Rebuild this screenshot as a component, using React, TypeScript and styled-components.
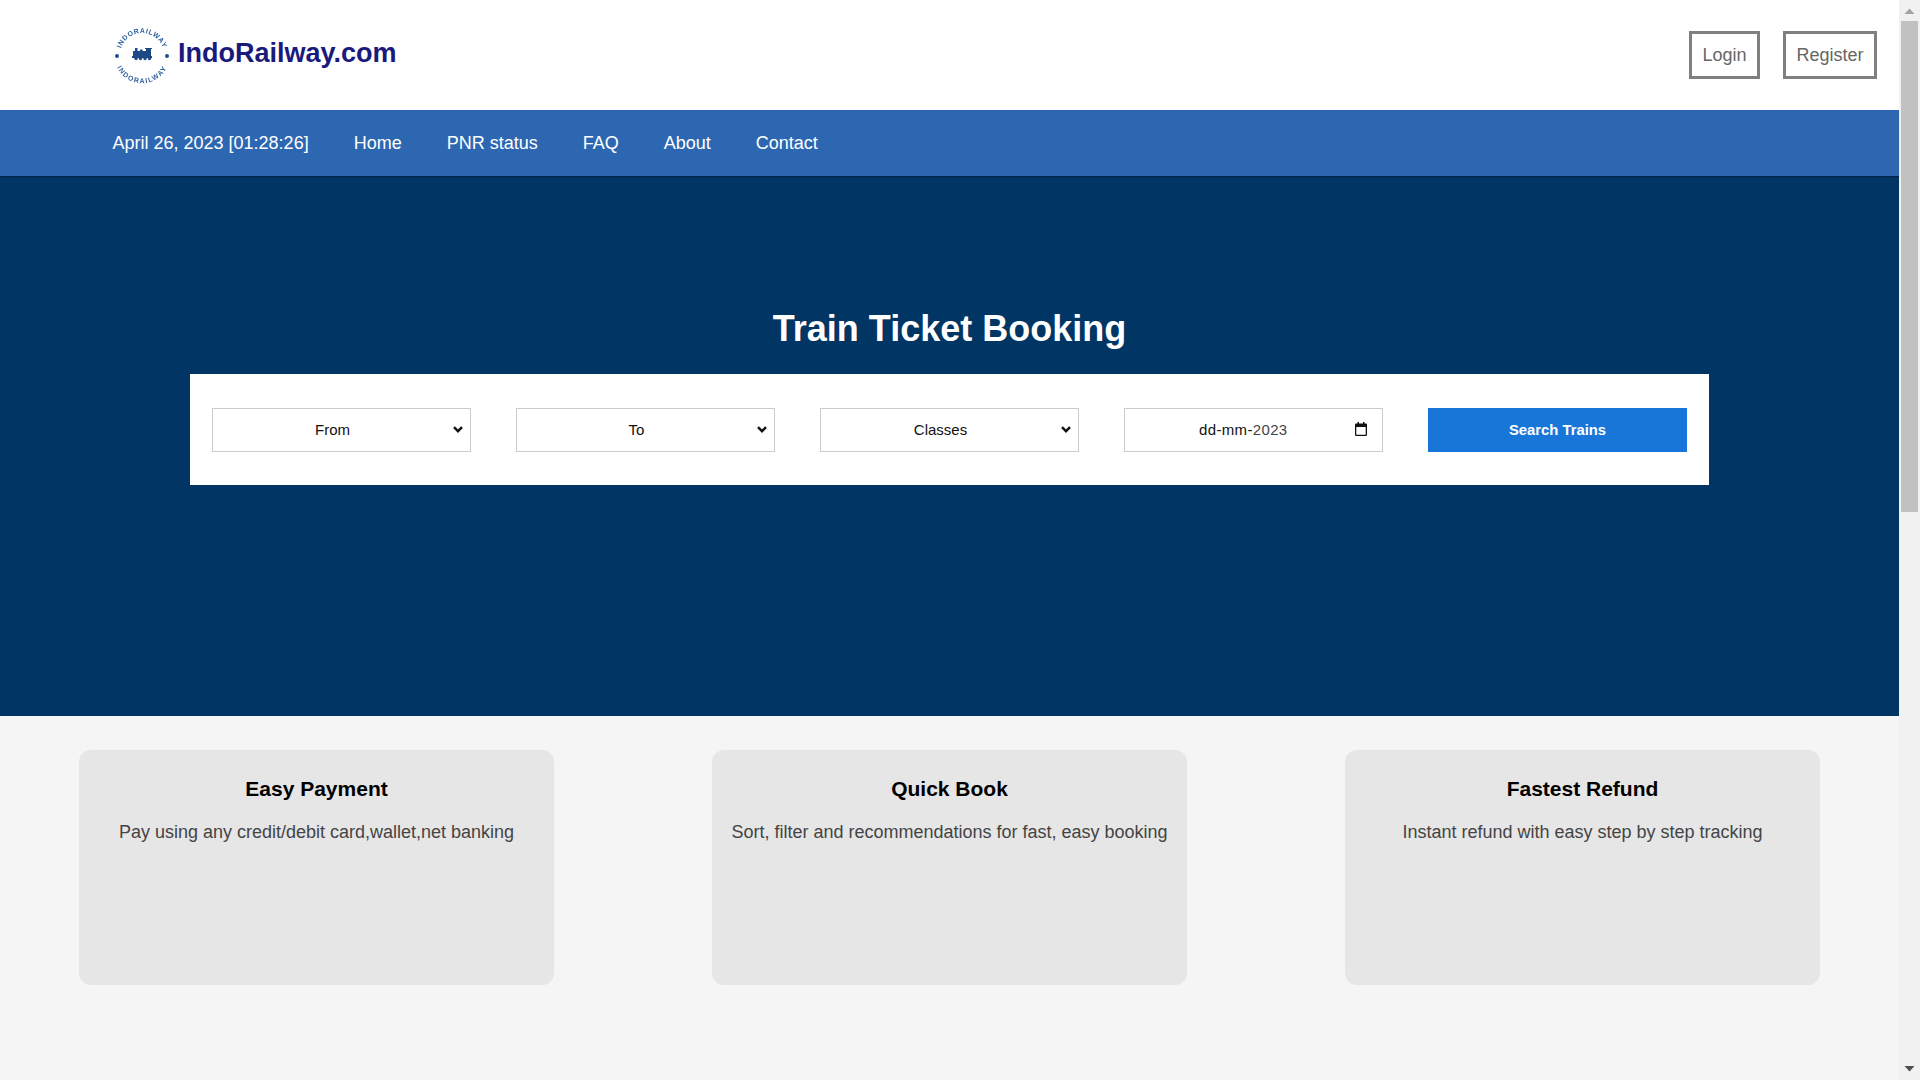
import React from "react";
import styled, { createGlobalStyle } from "styled-components";

const upArrow =
  "url(\"data:image/svg+xml,%3Csvg xmlns='http://www.w3.org/2000/svg' width='21' height='21'%3E%3Cpath d='M5.500 14h10l-5-5.500z' fill='%23a3a3a3'/%3E%3C/svg%3E\")";
const downArrow =
  "url(\"data:image/svg+xml,%3Csvg xmlns='http://www.w3.org/2000/svg' width='21' height='21'%3E%3Cpath d='M5.500 7h10l-5 5.500z' fill='%23505050'/%3E%3C/svg%3E\")";
const chevron =
  "url(\"data:image/svg+xml,%3Csvg xmlns='http://www.w3.org/2000/svg' width='10' height='7'%3E%3Cpath d='M1 1.200 5 5.200l4-4' fill='none' stroke='%23111' stroke-width='2.400'/%3E%3C/svg%3E\")";

const GlobalStyle = createGlobalStyle`
  html, body {
    height: 100%;
    overflow: hidden;
  }
  body {
    margin: 0;
    background: #f5f5f5;
    font-family: "Liberation Sans", Arial, sans-serif;
  }
`;

const Shell = styled.div`
  height: 100vh;
  display: flex;
  overflow: hidden;
`;

const Main = styled.main`
  flex: 1;
  min-width: 0;
  background: #f5f5f5;
`;

/* the browser's own scrollbar does not show up in the photo, so it is drawn */
const ScrollRail = styled.div`
  width: 21px;
  flex: none;
  display: flex;
  flex-direction: column;
  background: #f1f1f1;
`;

const ScrollButton = styled.div<{ $down?: boolean }>`
  height: 21px;
  flex: none;
  background: ${(p) => (p.$down ? downArrow : upArrow)} no-repeat center;
`;

const ScrollTrack = styled.div`
  flex: 1;
`;

const ScrollThumb = styled.div`
  height: 491px;
  margin: 0 2px;
  background: #c1c1c1;
`;

const Header = styled.header`
  height: 110px;
  background: #fff;
  display: flex;
  align-items: center;
  justify-content: space-between;
  padding: 0 22px 0 112px;
`;

const Brand = styled.div`
  display: flex;
  align-items: center;
  gap: 6px;
`;

const BrandName = styled.span`
  font-size: 27px;
  font-weight: 700;
  color: #1a1a7c;
  margin-top: -4px;
`;

const LogoMark = styled.svg`
  display: block;
  filter: blur(0.3px);
`;

const Auth = styled.div`
  display: flex;
  gap: 23px;
`;

const AuthButton = styled.button`
  height: 48px;
  padding: 0 10.5px;
  background: #fff;
  border: 3px solid #808080;
  font-family: inherit;
  font-size: 18px;
  color: #666;
`;

const Nav = styled.nav`
  height: 66px;
  background: #2d67b2;
  display: flex;
  align-items: center;
  gap: 45px;
  padding-left: 112.5px;
  box-shadow: 0 1px 1px rgba(0, 0, 0, 0.25);
  position: relative;
`;

const NavItem = styled.a`
  font-size: 18px;
  color: #fff;
`;

const Hero = styled.section`
  height: 540px;
  background: #013564;
  display: flex;
  flex-direction: column;
  align-items: center;
  padding-top: 131px;
  box-sizing: border-box;
`;

const Title = styled.h1`
  margin: 0 0 23px;
  font-size: 36px;
  line-height: 44px;
  font-weight: 700;
  color: #fff;
`;

const SearchForm = styled.form`
  width: 1519px;
  height: 111px;
  box-sizing: border-box;
  padding: 0 22px;
  background: #fff;
  display: flex;
  align-items: center;
  justify-content: space-between;
`;

const Select = styled.select`
  appearance: none;
  width: 259px;
  height: 44px;
  box-sizing: border-box;
  padding: 0 18px 0 0;
  background: #fff ${chevron} no-repeat right 7px center;
  border: 1px solid #ccc;
  border-radius: 0;
  font-family: inherit;
  font-size: 15px;
  color: #111;
  text-align: center;
`;

const DateField = styled.div`
  width: 259px;
  height: 44px;
  box-sizing: border-box;
  border: 1px solid #ccc;
  display: flex;
  align-items: center;
  justify-content: space-between;
  padding: 0 15px 0 74px;
  font-size: 15px;
  letter-spacing: 0.35px;
  color: #111;
`;

const DateYear = styled.span`
  color: #444;
`;

const CalendarMark = styled.svg`
  margin-top: -2px;
`;

const SearchButton = styled.button`
  width: 259px;
  height: 44px;
  background: #1976d9;
  border: 0;
  font-family: inherit;
  font-size: 14.8px;
  font-weight: 700;
  color: #fff;
`;

const Features = styled.section`
  display: flex;
  justify-content: space-around;
  padding-top: 34px;
`;

const Card = styled.article`
  width: 25%;
  height: 235px;
  box-sizing: border-box;
  padding-top: 25px;
  background: #e6e6e6;
  border-radius: 12px;
  text-align: center;
`;

const CardTitle = styled.h3`
  margin: 0 0 17px;
  font-size: 21px;
  line-height: 28px;
  font-weight: 700;
  color: #000;
`;

const CardText = styled.p`
  margin: 0;
  font-size: 18px;
  line-height: 24px;
  color: #444;
`;

const Logo = () => (
  <LogoMark width="60" height="60" viewBox="0 0 60 60">
    <defs>
      <path id="arcTop" d="M8.200 27 A22 22 0 0 1 51.800 27" />
      <path id="arcBottom" d="M2.700 34 A27.500 27.500 0 0 0 57.300 34" />
    </defs>
    <g fill="#2f5f9e" fontFamily="Liberation Sans, sans-serif" fontSize="7" fontWeight="700">
      <text letterSpacing="0.6">
        <textPath href="#arcTop" startOffset="50%" textAnchor="middle">
          INDORAILWAY
        </textPath>
      </text>
      <text letterSpacing="1.2">
        <textPath href="#arcBottom" startOffset="50%" textAnchor="middle">
          INDORAILWAY
        </textPath>
      </text>
    </g>
    <circle cx="5" cy="31" r="2" fill="#1f4f8f" />
    <circle cx="55" cy="31" r="2" fill="#1f4f8f" />
    <g fill="#1c4a86">
      <path d="M23 23h2.500v3H28v-1.500h2.500V26H34v-2h-1v-1h7v1h-1v7h1v2H20v-2h1v-5h2z" />
      <circle cx="24" cy="33.500" r="1.700" />
      <circle cx="28.500" cy="33.500" r="1.700" />
      <circle cx="33" cy="33.500" r="1.700" />
      <circle cx="37.500" cy="33.500" r="1.700" />
    </g>
  </LogoMark>
);

const CalendarIcon = () => (
  <CalendarMark width="12" height="14" viewBox="0 0 12 14">
    <path
      fill="#111"
      d="M2.500 0h1.500v1.500h4V0h1.500v1.500h1.200A1 1 0 0 1 12 2.700v10.100a1.200 1.200 0 0 1-1.200 1.200H1.200A1.200 1.200 0 0 1 0 12.800V2.700a1.200 1.200 0 0 1 1.200-1.200h1.300zM1.300 5v7.700h9.400V5z"
    />
  </CalendarMark>
);

const features = [
  { title: "Easy Payment", text: "Pay using any credit/debit card,wallet,net banking" },
  { title: "Quick Book", text: "Sort, filter and recommendations for fast, easy booking" },
  { title: "Fastest Refund", text: "Instant refund with easy step by step tracking" },
];

const navItems = ["April 26, 2023 [01:28:26]", "Home", "PNR status", "FAQ", "About", "Contact"];

const App: React.FC = () => (
  <Shell>
    <GlobalStyle />
    <Main>
      <Header>
        <Brand>
          <Logo />
          <BrandName>IndoRailway.com</BrandName>
        </Brand>
        <Auth>
          <AuthButton>Login</AuthButton>
          <AuthButton>Register</AuthButton>
        </Auth>
      </Header>
      <Nav>
        {navItems.map((item) => (
          <NavItem key={item}>{item}</NavItem>
        ))}
      </Nav>
      <Hero>
        <Title>Train Ticket Booking</Title>
        <SearchForm>
          <Select>
            <option>From</option>
          </Select>
          <Select>
            <option>To</option>
          </Select>
          <Select>
            <option>Classes</option>
          </Select>
          <DateField>
            <span>
              dd-mm-<DateYear>2023</DateYear>
            </span>
            <CalendarIcon />
          </DateField>
          <SearchButton type="button">Search Trains</SearchButton>
        </SearchForm>
      </Hero>
      <Features>
        {features.map((feature) => (
          <Card key={feature.title}>
            <CardTitle>{feature.title}</CardTitle>
            <CardText>{feature.text}</CardText>
          </Card>
        ))}
      </Features>
    </Main>
    <ScrollRail>
      <ScrollButton />
      <ScrollThumb />
      <ScrollTrack />
      <ScrollButton $down />
    </ScrollRail>
  </Shell>
);

export default App;
